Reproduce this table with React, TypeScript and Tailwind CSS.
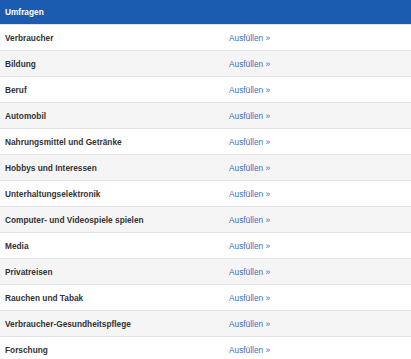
const ROWS = [
  'Verbraucher',
  'Bildung',
  'Beruf',
  'Automobil',
  'Nahrungsmittel und Getränke',
  'Hobbys und Interessen',
  'Unterhaltungselektronik',
  'Computer- und Videospiele spielen',
  'Media',
  'Privatreisen',
  'Rauchen und Tabak',
  'Verbraucher-Gesundheitspflege',
  'Forschung',
];

export default function App() {
  return (
    <div className="w-[411px] bg-white font-['Liberation_Sans',Arial,sans-serif] text-[8.3px]">
      <div className="flex h-6 items-center bg-[#1b5cb0] px-[5px] font-bold text-white">Umfragen</div>
      {ROWS.map((label, i) => (
        <div
          key={label}
          className={`grid h-[26px] grid-cols-[224px_1fr] items-center border-t border-[#e2e2e2] px-[5px] pt-px ${
            i % 2 === 1 ? 'bg-[#f5f5f5]' : 'bg-white'
          }`}
        >
          <span className="font-bold text-[#333]">{label}</span>
          <a href="#" className="text-[#3d72b8]">
            Ausfüllen »
          </a>
        </div>
      ))}
    </div>
  );
}
